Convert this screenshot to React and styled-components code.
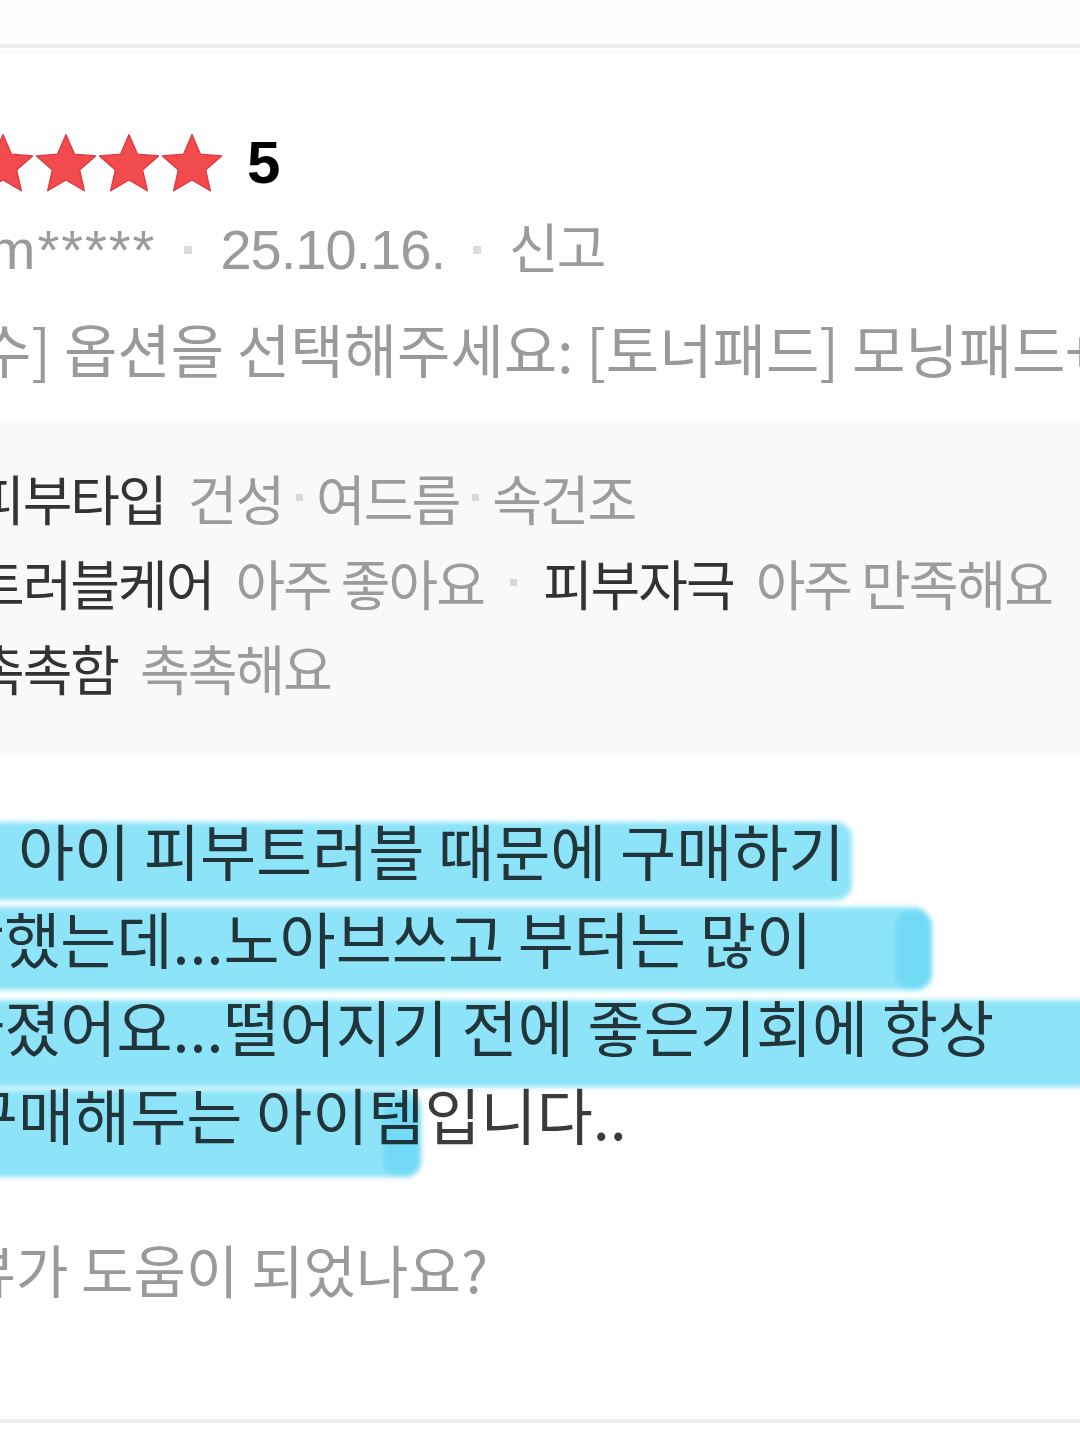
import React from 'react';
import styled, { createGlobalStyle } from 'styled-components';

const GlobalStyle = createGlobalStyle`
  html, body {
    margin: 0;
    padding: 0;
    background: #fff;
  }
  body {
    font-family: "Noto Sans CJK KR", "Noto Sans", sans-serif;
    -webkit-font-smoothing: antialiased;
  }
`;

const Page = styled.div`
  width: 1080px;
  height: 1437px;
  overflow: hidden;
  background: #fff;
`;

const PrevEnd = styled.div`
  height: 44px;
  background: #fdfdfd;
`;

const Divider = styled.div`
  height: 4px;
  background: #eeeeee;
`;

const HairLine = styled.div`
  height: 1px;
  margin-top: 3px;
  background: #f4f4f4;
`;

/* the screenshot is a zoomed crop: the review column starts left of the viewport */
const Article = styled.article`
  margin-left: -95px;
  width: 1300px;
  padding-top: 81px;
`;

const StarRow = styled.div`
  display: flex;
  align-items: center;
  height: 60px;
  margin-left: 5px;
  gap: 3px;
`;

const Score = styled.span`
  margin-left: 22px;
  font-family: "Liberation Sans", Arial, sans-serif;
  font-weight: 700;
  font-size: 60px;
  line-height: 60px;
  color: #000;
`;

const MetaRow = styled.div`
  display: flex;
  align-items: center;
  height: 60px;
  margin-top: 27px;
  color: #9b9b9b;
  font-family: "Liberation Sans", "Noto Sans CJK KR", sans-serif;
  white-space: nowrap;
`;

const MetaText = styled.span`
  font-size: ${(p) => p.$size || 56}px;
  letter-spacing: ${(p) => p.$spacing || 0}px;
  line-height: 60px;
`;

const Sep = styled.span`
  flex: none;
  display: inline-block;
  width: ${(p) => p.$size || 8}px;
  height: ${(p) => p.$size || 8}px;
  margin: 0 ${(p) => p.$gap || 28}px;
  background: ${(p) => p.$color || '#dcdcdc'};
`;

const OptionRow = styled.div`
  margin-top: 36px;
  height: 64px;
  font-size: 58px;
  line-height: 64px;
  color: #9a9a9a;
  white-space: nowrap;
`;

const InfoBox = styled.div`
  margin-top: 40px;
  padding: 35px 0 45px 70px;
  background: #f8f9fa;
`;

const InfoRow = styled.div`
  display: flex;
  align-items: center;
  height: 85px;
  font-size: 54px;
  letter-spacing: -2px;
  white-space: nowrap;
`;

const Label = styled.span`
  color: #333;
  margin-right: 22px;
`;

const Value = styled.span`
  color: #9c9c9c;
`;

const ReviewBody = styled.div`
  position: relative;
  margin-top: 51px;
  margin-left: -13px;
  font-size: 61px;
  line-height: 88px;
  color: #3b3b3b;
  white-space: nowrap;
`;

const Line = styled.div`
  height: 88px;
`;

const Marker = styled.svg`
  position: absolute;
  left: 0;
  top: 0;
  width: 1300px;
  height: 352px;
  overflow: visible;
  mix-blend-mode: multiply;
  pointer-events: none;
`;

const HelpPrompt = styled.div`
  margin-top: 78px;
  margin-left: 6px;
  height: 64px;
  font-size: 57px;
  line-height: 64px;
  color: #9a9a9a;
  white-space: nowrap;
`;

const BottomDivider = styled.div`
  margin-top: 119px;
  height: 4px;
  background: #eeeeee;
`;

function Star() {
  return (
    <svg width="60" height="58" viewBox="1.2 1.4 21.6 20.8">
      <path
        d="M12 1.6l3.05 7.02 7.6.68-5.76 5.03 1.7 7.45L12 17.86l-6.59 3.92 1.7-7.45L1.35 9.3l7.6-.68z"
        fill="#f24b4e"
        stroke="#e0393d"
        strokeWidth="0.5"
        strokeLinejoin="round"
      />
    </svg>
  );
}

const highlights = [
  { x: 60, y: 16, w: 900, h: 78 },
  { x: 60, y: 101, w: 978, h: 83 },
  { x: 60, y: 194, w: 1160, h: 87 },
  { x: 60, y: 284, w: 469, h: 87 },
];

const blobs = [
  { x: 1003, y: 104, w: 37, h: 80 },
  { x: 491, y: 294, w: 38, h: 77 },
];

function App() {
  return (
    <Page>
      <GlobalStyle />
      <PrevEnd />
      <Divider />
      <HairLine />
      <Article>
        <StarRow>
          <Star />
          <Star />
          <Star />
          <Star />
          <Star />
          <Score>5</Score>
        </StarRow>

        <MetaRow>
          <MetaText $spacing={2}>ryem*****</MetaText>
          <Sep />
          <MetaText $spacing={-1}>25.10.16.</MetaText>
          <Sep />
          <MetaText $size={54} $spacing={-2}>신고</MetaText>
        </MetaRow>

        <OptionRow>[필수] 옵션을 선택해주세요: [토너패드] 모닝패드+나이트패드 세트</OptionRow>

        <InfoBox>
          <InfoRow>
            <Label>피부타입</Label>
            <Value>건성</Value>
            <Sep $size={7} $gap={13} $color="#d8d8d8" />
            <Value>여드름</Value>
            <Sep $size={7} $gap={13} $color="#d8d8d8" />
            <Value>속건조</Value>
          </InfoRow>
          <InfoRow>
            <Label>트러블케어</Label>
            <Value>아주 좋아요</Value>
            <Sep $size={7} $gap={26} $color="#d8d8d8" />
            <Label>피부자극</Label>
            <Value>아주 만족해요</Value>
          </InfoRow>
          <InfoRow>
            <Label>촉촉함</Label>
            <Value>촉촉해요</Value>
          </InfoRow>
        </InfoBox>

        <ReviewBody>
          <Line>우리 아이 피부트러블 때문에 구매하기</Line>
          <Line>시작했는데...노아브쓰고 부터는 많이</Line>
          <Line>좋아졌어요...떨어지기 전에 좋은기회에 항상</Line>
          <Line>꼭 구매해두는 아이템입니다..</Line>
          <Marker viewBox="0 0 1300 352">
            <defs>
              <filter id="soft" x="-5%" y="-20%" width="110%" height="140%">
                <feGaussianBlur stdDeviation="2.4" />
              </filter>
            </defs>
            <g filter="url(#soft)">
              {highlights.map((h, i) => (
                <rect key={i} x={h.x} y={h.y} width={h.w} height={h.h} rx="16" fill="#8de4f8" />
              ))}
              {blobs.map((b, i) => (
                <rect key={'b' + i} x={b.x} y={b.y} width={b.w} height={b.h} rx="16" fill="#72daf5" />
              ))}
            </g>
          </Marker>
        </ReviewBody>

        <HelpPrompt>리뷰가 도움이 되었나요?</HelpPrompt>
      </Article>
      <BottomDivider />
    </Page>
  );
}

export default App;
